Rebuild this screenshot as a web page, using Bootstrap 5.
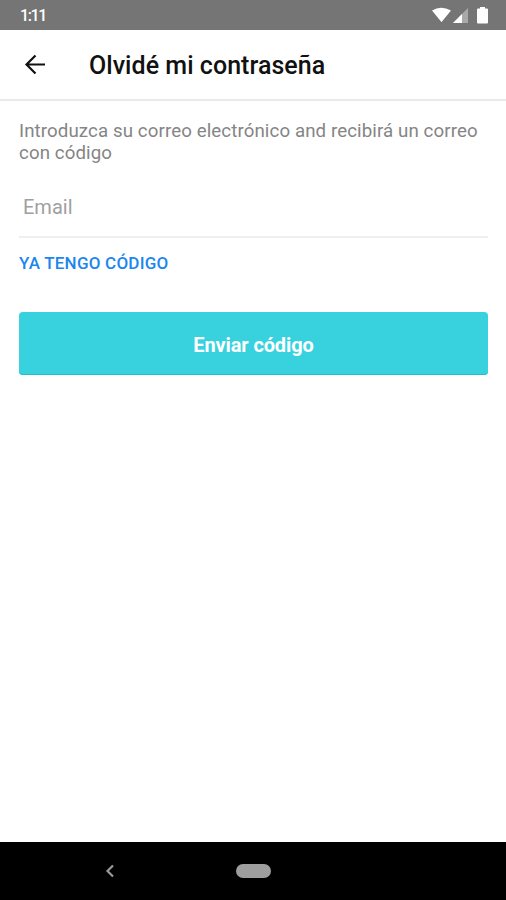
<!DOCTYPE html>
<html lang="es">
<head>
<meta charset="utf-8">
<meta name="viewport" content="width=device-width, initial-scale=1">
<title>Olvidé mi contraseña</title>
<link href="https://cdn.jsdelivr.net/npm/bootstrap@5.3.0/dist/css/bootstrap.min.css" rel="stylesheet">
<style>
body{font-family:Roboto,"Liberation Sans",sans-serif;background:#fff}
.screen{height:900px;overflow:hidden}
.status-bar{height:30px;background:#757575;font-size:16px;font-weight:500;padding:0 17px 0 20px}
.clock{letter-spacing:-1.35px;padding-top:2px}
.app-bar{height:71px;border-bottom:2px solid #e9e9e9;padding-left:24px}
.app-title{font-size:25px;font-weight:500;color:#111;margin:2px 0 0 43px;line-height:30px;letter-spacing:.04px}
.content{padding:19px 18px 0 19px}
.intro{font-size:18.7px;line-height:22px;color:#858585;letter-spacing:.1px}
.email-field{height:74px;border:0;border-bottom:2px solid #efeff1;border-radius:0;padding:14px 4px 0;font-size:20px}
.email-field::placeholder{color:#a0a0a0}
.code-link{font-size:17px;line-height:20px;font-weight:500;color:#1a86ee;margin-top:15px;letter-spacing:.22px}
.send-btn{height:63px;margin-top:39px;padding-top:8px;background:#38d1de;border-radius:4px;color:#fff;font-size:20px;font-weight:700;letter-spacing:-.12px}
.send-btn:not(:hover){box-shadow:inset 0 -1px #1fc0cd}
.nav-bar{height:58px;background:#000;padding-left:105px}
.home-pill{width:35px;height:14px;background:#9e9e9e;margin-left:121px}
</style>
<script src="https://cdn.jsdelivr.net/npm/bootstrap@5.3.0/dist/js/bootstrap.bundle.min.js"></script>
</head>
<body>
<div class="screen d-flex flex-column">
  <div class="status-bar d-flex align-items-center justify-content-between text-white">
    <span class="clock">1:11</span>
    <svg width="58" height="18" viewBox="0 0 58 18"><path fill="#fff" d="M1 4.500Q10-1 20 4.500L11 15.500Q10.500 16.500 10 15.500Z"/><path fill="#a9a9a9" d="M37 2V17H22Z"/><path fill="#fff" d="M31 8V17H22Z"/><rect x="46" y="2.500" width="11" height="15" rx="1" fill="#fff"/><path fill="#fff" d="M49 1H54V4H49Z"/></svg>
  </div>
  <header class="app-bar d-flex align-items-center flex-shrink-0">
    <svg width="22" height="22" viewBox="0 0 22 22" fill="none" stroke="#111" stroke-width="2.200"><path d="M21 10.500H3M11.500 1.500L2.500 10.500L11.500 19.500"/></svg>
    <h1 class="app-title">Olvidé mi contraseña</h1>
  </header>
  <main class="content flex-grow-1">
    <p class="intro mb-0">Introduzca su correo electrónico and recibirá un correo con código</p>
    <input class="email-field form-control shadow-none" type="email" placeholder="Email">
    <a class="code-link d-block text-decoration-none" href="#">YA TENGO CÓDIGO</a>
    <button class="send-btn btn w-100 border-0">Enviar código</button>
  </main>
  <nav class="nav-bar d-flex align-items-center flex-shrink-0">
    <svg width="10" height="14" viewBox="0 0 10 14" fill="none" stroke="#999" stroke-width="2.200"><path d="M8 1.500L2.500 7L8 12.500"/></svg>
    <span class="home-pill rounded-pill"></span>
  </nav>
</div>
</body>
</html>
